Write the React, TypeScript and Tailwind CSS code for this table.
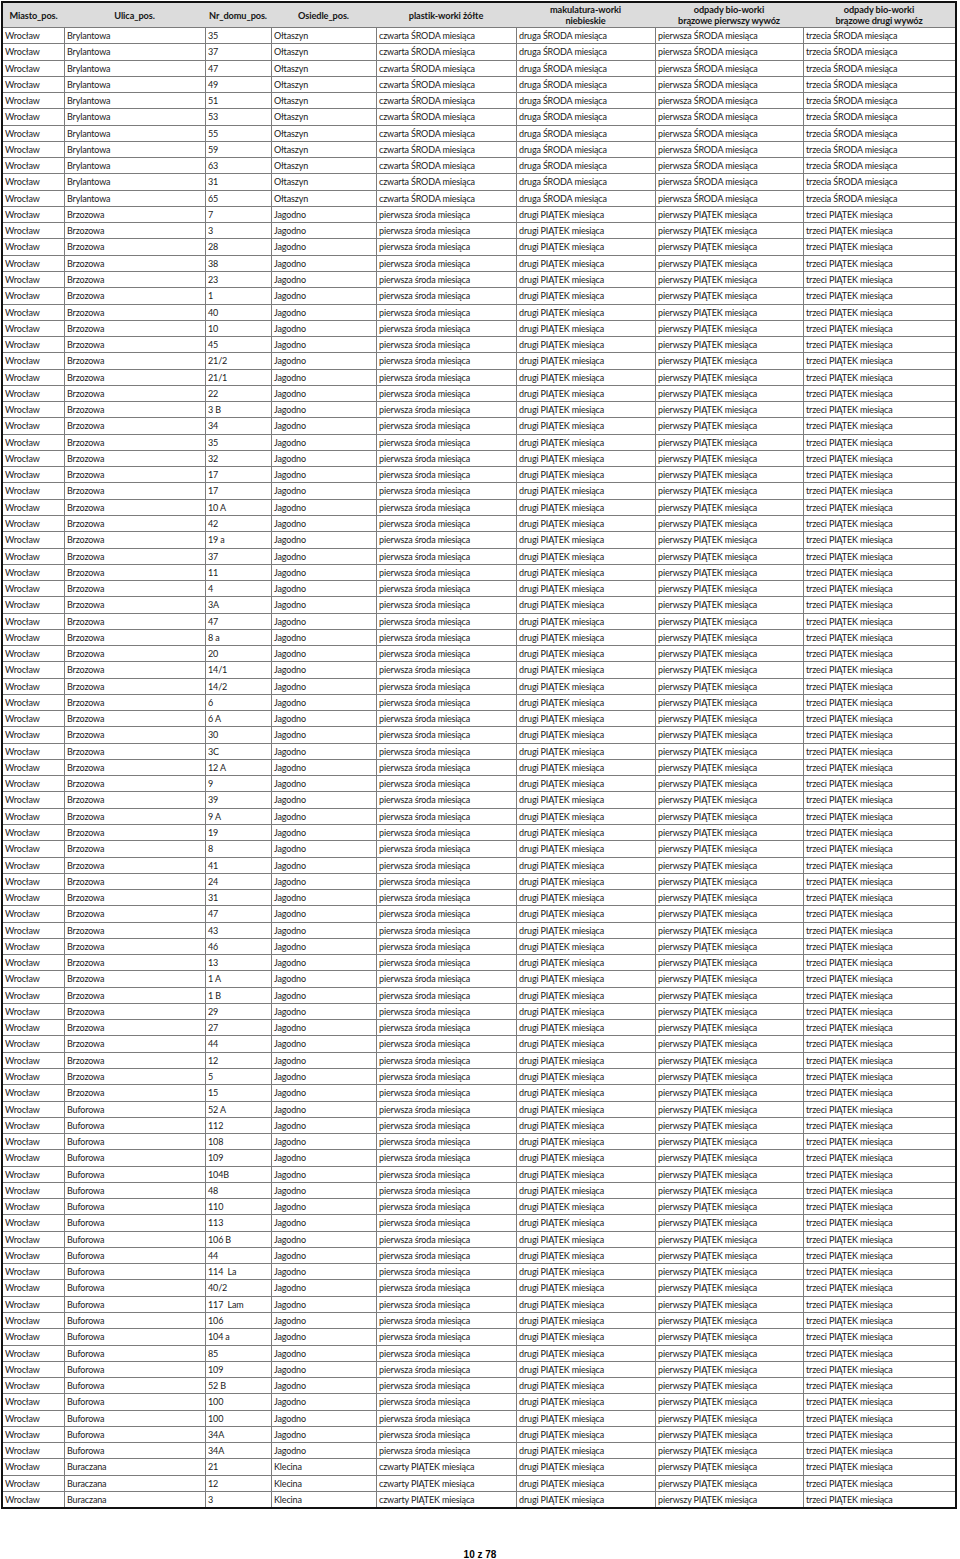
import React from "react";

type Row = [string, string, string, string, number];

const SCHED: string[][] = [
  ["czwarta ŚRODA miesiąca", "druga ŚRODA miesiąca", "pierwsza ŚRODA miesiąca", "trzecia ŚRODA miesiąca"],
  ["pierwsza środa miesiąca", "drugi PIĄTEK miesiąca", "pierwszy PIĄTEK miesiąca", "trzeci PIĄTEK miesiąca"],
  ["czwarty PIĄTEK miesiąca", "drugi PIĄTEK miesiąca", "pierwszy PIĄTEK miesiąca", "trzeci PIĄTEK miesiąca"],
];

const bry = ["35", "37", "47", "49", "51", "53", "55", "59", "63", "31", "65"];
const brz = [
  "7", "3", "28", "38", "23", "1", "40", "10", "45", "21/2", "21/1", "22", "3 B", "34", "35", "32", "17", "17",
  "10 A", "42", "19 a", "37", "11", "4", "3A", "47", "8 a", "20", "14/1", "14/2", "6", "6 A", "30", "3C", "12 A",
  "9", "39", "9 A", "19", "8", "41", "24", "31", "47", "43", "46", "13", "1 A", "1 B", "29", "27", "44", "12", "5", "15",
];
const buf = [
  "52 A", "112", "108", "109", "104B", "48", "110", "113", "106 B", "44", "114  La", "40/2", "117  Lam", "106",
  "104 a", "85", "109", "52 B", "100", "100", "34A", "34A",
];
const bur = ["21", "12", "3"];

const rows: Row[] = [
  ...bry.map((n): Row => ["Wrocław", "Brylantowa", n, "Ołtaszyn", 0]),
  ...brz.map((n): Row => ["Wrocław", "Brzozowa", n, "Jagodno", 1]),
  ...buf.map((n): Row => ["Wrocław", "Buforowa", n, "Jagodno", 1]),
  ...bur.map((n): Row => ["Wrocław", "Buraczana", n, "Klecina", 2]),
];

const W = ["w-[61px]", "w-[141px]", "w-[66px]", "w-[105px]", "w-[140px]", "w-[139px]", "w-[148px]", "w-[152px]"];

const headers: string[][] = [
  ["Miasto_pos."],
  ["Ulica_pos."],
  ["Nr_domu_pos."],
  ["Osiedle_pos."],
  ["plastik-worki żółte"],
  ["makulatura-worki", "niebieskie"],
  ["odpady bio-worki", "brązowe pierwszy wywóz"],
  ["odpady bio-worki", "brązowe drugi wywóz"],
];

export default function App() {
  return (
    <div className="w-[960px] h-[1559px] bg-white relative" style={{ fontFamily: "Lato, 'Open Sans', sans-serif" }}>
      <div className="pt-[1px] pl-[1px]">
        <div className="w-[956px] border-2 border-[#111]">
          <div className="flex h-[24px] bg-[#dcdcdc] text-[#151515] font-bold text-[9.2px] leading-[11px] tracking-[-0.1px]">
            {headers.map((h, i) => (
              <div key={i} className={`${W[i]} shrink-0 flex flex-col items-center justify-center text-center`}>
                {h.map((l, j) => (
                  <div key={j}>{l}</div>
                ))}
              </div>
            ))}
          </div>
          {rows.map((r, i) => {
            const s = SCHED[r[4]];
            const cells = [r[0], r[1], r[2], r[3], s[0], s[1], s[2], s[3]];
            return (
              <div
                key={i}
                className="flex h-[16.27px] border-t border-[#7c7c7c] text-[9px] tracking-[-0.15px] text-[#1a1a1a] leading-[15px]"
              >
                {cells.map((c, j) => (
                  <div
                    key={j}
                    className={`${W[j]} shrink-0 whitespace-pre overflow-hidden ${j === 0 ? "pl-[2px]" : "border-l border-[#7c7c7c] pl-[2px]"}`}
                  >
                    {c}
                  </div>
                ))}
              </div>
            );
          })}
        </div>
      </div>
      <div
        className="absolute left-0 right-0 top-[1547px] text-center font-bold text-[10px] text-black"
        style={{ fontFamily: "'Liberation Sans', Arial, sans-serif" }}
      >
        10 z 78
      </div>
    </div>
  );
}
